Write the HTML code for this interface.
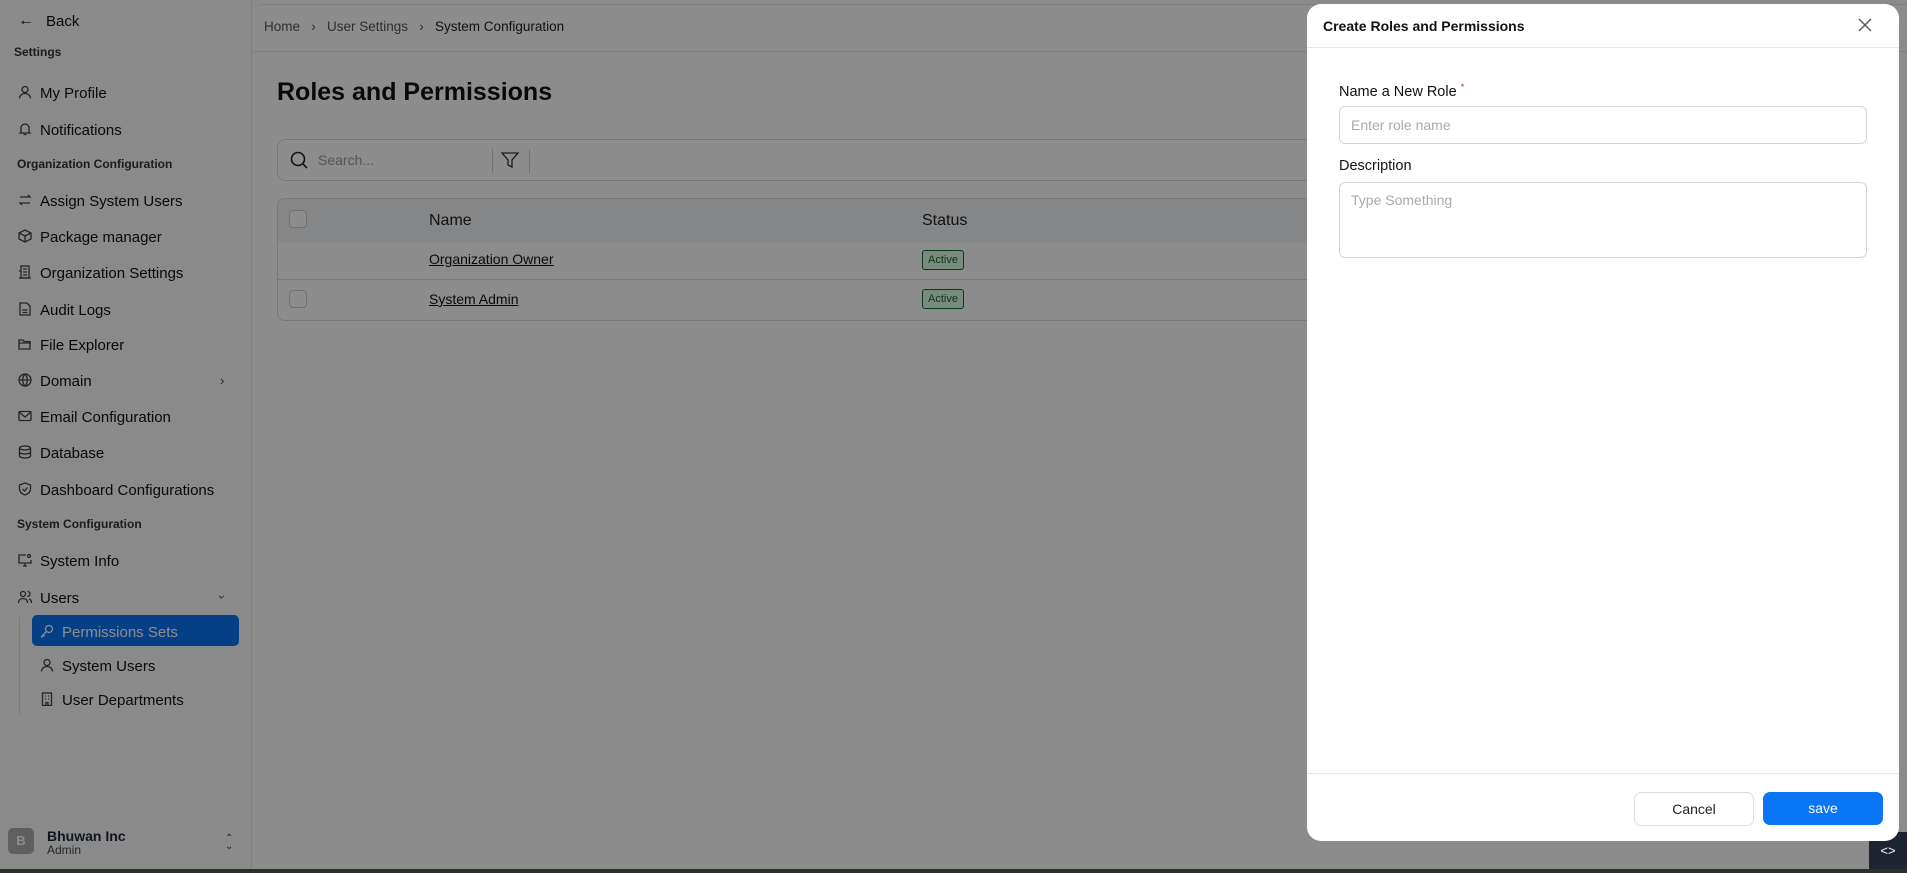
<!DOCTYPE html>
<html><head><meta charset="utf-8"><style>
*{box-sizing:border-box;margin:0;padding:0}
body{width:1907px;height:873px;overflow:hidden;font-family:"Liberation Sans",sans-serif;background:#fafbfc;position:relative;color:#111}
.sb{position:absolute;left:0;top:0;width:252px;height:869px;background:#fbfcfe;border-right:1px solid #e5e7eb}
.it{position:absolute;left:18px;font-size:15px;color:#111;display:flex;align-items:center;gap:8px;margin-top:3px}
.it svg{width:14px;height:14px;stroke:#444;fill:none;stroke-width:1.3;margin-top:-3px}
.sec{position:absolute;left:17px;font-size:12px;font-weight:bold;color:#333}
.main{position:absolute;left:252px;top:4px;width:1655px;height:865px;background:#fff;border-top-left-radius:12px;border-top:1px solid #e5e7eb}
.bc{position:absolute;left:12px;top:14px;font-size:13.5px;color:#555}
.bc b{font-weight:normal;color:#222}
.ov{position:absolute;left:0;top:0;width:1907px;height:873px;background:rgba(0,0,0,0.45)}
.modal{position:absolute;left:1307px;top:4px;width:592px;height:837px;background:#fff;border-radius:14px}
.inp{position:absolute;left:32px;width:528px;border:1px solid #d4d4d8;border-radius:6px;font-size:14px;color:#aaa;padding-left:11px}
</style></head><body>
<div class="sb">
 <div class="it" style="top:9px"><span style="font-size:16px">←</span><span style="margin-left:4px">Back</span></div>
 <div class="sec" style="top:45px;left:14px">Settings</div>
 <div class="it" style="top:82px"><svg viewBox="0 0 14 14"><circle cx="7" cy="4.5" r="3"/><path d="M1.5 13.5c0-3 2.5-5 5.5-5s5.5 2 5.5 5"/></svg>My Profile</div>
 <div class="it" style="top:119px"><svg viewBox="0 0 14 14"><path d="M3 10V6a4 4 0 018 0v4l1 1H2zM5.5 12.5h3"/></svg>Notifications</div>
 <div class="sec" style="top:157px">Organization Configuration</div>
 <div class="it" style="top:190px"><svg viewBox="0 0 14 14"><path d="M2 4h10l-2-2M12 10H2l2 2"/></svg>Assign System Users</div>
 <div class="it" style="top:226px"><svg viewBox="0 0 14 14"><path d="M7 1l6 3v6l-6 3-6-3V4zM1 4l6 3 6-3M7 7v6"/></svg>Package manager</div>
 <div class="it" style="top:262px"><svg viewBox="0 0 14 14"><rect x="3" y="1" width="8" height="12"/><path d="M1 6h2M1 13h12M5 4h4M5 7h4M5 10h4"/></svg>Organization Settings</div>
 <div class="it" style="top:299px"><svg viewBox="0 0 14 14"><path d="M2 1h7l3 3v9H2zM4.5 8h5M4.5 10.5h5"/></svg>Audit Logs</div>
 <div class="it" style="top:334px"><svg viewBox="0 0 14 14"><path d="M1 3h4l1 1.5h6V12H1zM1 6h12"/></svg>File Explorer</div>
 <div class="it" style="top:370px"><svg viewBox="0 0 14 14"><circle cx="7" cy="7" r="6"/><path d="M1 7h12M7 1c-3 3-3 9 0 12M7 1c3 3 3 9 0 12"/></svg>Domain</div>
 <div style="position:absolute;left:220px;top:373px;font-size:13px;color:#444">›</div>
 <div class="it" style="top:406px"><svg viewBox="0 0 14 14"><rect x="1" y="2.5" width="12" height="9" rx="1"/><path d="M1 3l6 5 6-5"/></svg>Email Configuration</div>
 <div class="it" style="top:442px"><svg viewBox="0 0 14 14"><ellipse cx="7" cy="3" rx="5.5" ry="2"/><path d="M1.5 3v8c0 1.1 2.5 2 5.5 2s5.5-.9 5.5-2V3M1.5 7c0 1.1 2.5 2 5.5 2s5.5-.9 5.5-2"/></svg>Database</div>
 <div class="it" style="top:479px"><svg viewBox="0 0 14 14"><path d="M7 1l5.5 2v4c0 3-2.5 5-5.5 6-3-1-5.5-3-5.5-6V3zM4.5 7l2 2 3-3.5"/></svg>Dashboard Configurations</div>
 <div class="sec" style="top:517px">System Configuration</div>
 <div class="it" style="top:550px"><svg viewBox="0 0 14 14"><path d="M8 2H1v8h12V7M5 13h4M7 10v3"/><circle cx="11" cy="3" r="1.5"/></svg>System Info</div>
 <div class="it" style="top:587px"><svg viewBox="0 0 14 14"><circle cx="5" cy="4" r="2.5"/><path d="M0.5 13c0-3 2-4.5 4.5-4.5s4.5 1.5 4.5 4.5M9.5 1.5a2.5 2.5 0 010 5M11 9c1.5.5 2.5 2 2.5 4"/></svg>Users</div>
 <div style="position:absolute;left:220px;top:590px;font-size:12px;color:#444;transform:rotate(90deg)">›</div>
 <div style="position:absolute;left:19px;top:617px;width:1px;height:97px;background:#ddd"></div>
 <div style="position:absolute;left:32px;top:615px;width:207px;height:31px;background:#0a75f5;border-radius:5px"></div>
 <div class="it" style="top:621px;left:40px;color:#fff"><svg viewBox="0 0 14 14" style="stroke:#fff"><circle cx="9" cy="5" r="3.5"/><path d="M6.5 7.5L1.5 12.5l1 1M3 11l1.5 1.5"/></svg>Permissions Sets</div>
 <div class="it" style="top:655px;left:40px"><svg viewBox="0 0 14 14"><circle cx="7" cy="4.5" r="3"/><path d="M1.5 13.5c0-3 2.5-5 5.5-5s5.5 2 5.5 5"/></svg>System Users</div>
 <div class="it" style="top:689px;left:40px"><svg viewBox="0 0 14 14"><rect x="2.5" y="1" width="9" height="12.5"/><path d="M5 4h1M8 4h1M5 7h1M8 7h1M6 13.5v-3h2v3"/></svg>User Departments</div>
 <div style="position:absolute;left:8px;top:828px;width:26px;height:26px;background:#aeaeae;border-radius:5px;color:#fff;font-weight:bold;font-size:13px;text-align:center;line-height:26px">B</div>
 <div style="position:absolute;left:47px;top:828px;font-size:14px;font-weight:bold;color:#1f2937">Bhuwan Inc</div>
 <div style="position:absolute;left:47px;top:843px;font-size:12px;color:#444">Admin</div>
 <div style="position:absolute;left:225px;top:835px;font-size:10px;color:#444;line-height:8px">⌃<br>⌄</div>
</div>
<div class="main">
 <div class="bc">Home &nbsp;&nbsp;›&nbsp;&nbsp; User Settings &nbsp;&nbsp;›&nbsp;&nbsp; <b>System Configuration</b></div>
 <div style="position:absolute;left:0;top:46px;width:100%;height:1px;background:#e5e7eb"></div>
 <div style="position:absolute;left:25px;top:73px;font-size:25px;font-weight:bold;color:#111">Roles and Permissions</div>
 <div style="position:absolute;left:25px;top:134px;width:1200px;height:42px;border:1px solid #d9d9d9;border-radius:8px">
  <svg style="position:absolute;left:12px;top:11px" width="18" height="18" viewBox="0 0 18 18" fill="none" stroke="#222" stroke-width="1.6"><circle cx="8" cy="8" r="6.5"/><path d="M13 13l4 4"/></svg>
  <span style="position:absolute;left:40px;top:12px;font-size:14px;color:#999">Search...</span>
  <div style="position:absolute;left:214px;top:9px;width:1px;height:24px;background:#ccc"></div>
  <svg style="position:absolute;left:223px;top:11px" width="18" height="18" viewBox="0 0 18 18" fill="none" stroke="#333" stroke-width="1.3"><path d="M1 2h16l-6 7v7l-4-2V9z"/></svg>
  <div style="position:absolute;left:251px;top:9px;width:1px;height:24px;background:#ccc"></div>
 </div>
 <div style="position:absolute;left:25px;top:193px;width:1200px;height:123px;border:1px solid #d9d9d9;border-radius:8px;overflow:hidden">
  <div style="height:43px;background:#f3f4f6;position:relative">
   <div style="position:absolute;left:11px;top:11px;width:18px;height:18px;border:1px solid #ccc;border-radius:4px;background:#fff"></div>
   <span style="position:absolute;left:151px;top:13px;font-size:16px;color:#222">Name</span>
   <span style="position:absolute;left:644px;top:13px;font-size:16px;color:#222">Status</span>
  </div>
  <div style="height:38px;border-bottom:1px solid #ddd;position:relative">
   <span style="position:absolute;left:151px;top:9px;font-size:14px;text-decoration:underline;color:#111">Organization Owner</span>
   <span style="position:absolute;left:644px;top:8px;font-size:11px;color:#166534;background:#dcfce7;border:1px solid #166534;border-radius:3px;padding:3px 5px">Active</span>
  </div>
  <div style="height:42px;position:relative">
   <div style="position:absolute;left:11px;top:10px;width:18px;height:18px;border:1px solid #ccc;border-radius:4px;background:#fff"></div>
   <span style="position:absolute;left:151px;top:11px;font-size:14px;text-decoration:underline;color:#111">System Admin</span>
   <span style="position:absolute;left:644px;top:9px;font-size:11px;color:#166534;background:#dcfce7;border:1px solid #166534;border-radius:3px;padding:3px 5px">Active</span>
  </div>
 </div>
</div>
<div class="ov"></div>
<div style="position:absolute;left:0;top:869px;width:1907px;height:4px;background:#2b302a"></div>
<div style="position:absolute;left:1869px;top:832px;width:38px;height:37px;background:#1e2530;color:#fff;font-size:13px;text-align:center;line-height:37px">&lt;&gt;</div>
<div class="modal">
 <div style="position:absolute;left:16px;top:14px;font-size:14px;font-weight:bold;color:#111">Create Roles and Permissions</div>
 <svg style="position:absolute;left:551px;top:14px" width="14" height="14" viewBox="0 0 14 14" stroke="#555" stroke-width="1.4"><path d="M1 1l12 12M13 1L1 13"/></svg>
 <div style="position:absolute;left:0;top:43px;width:100%;height:1px;background:#e5e7eb"></div>
 <div style="position:absolute;left:32px;top:78px;font-size:14.5px;color:#111">Name a New Role <sup style="color:#e11;font-size:9px">*</sup></div>
 <div class="inp" style="top:102px;height:38px;line-height:36px">Enter role name</div>
 <div style="position:absolute;left:32px;top:154px;font-size:14.5px;color:#111">Description</div>
 <div class="inp" style="top:178px;height:76px;padding-top:9px">Type Something</div>
 <div style="position:absolute;left:0;top:769px;width:100%;height:1px;background:#e2e8f0"></div>
 <div style="position:absolute;left:327px;top:788px;width:120px;height:34px;border:1px solid #ddd;border-radius:7px;text-align:center;line-height:32px;font-size:14px;color:#222">Cancel</div>
 <div style="position:absolute;left:456px;top:788px;width:120px;height:33px;background:#0a75f5;border-radius:7px;text-align:center;line-height:33px;font-size:14px;color:#fff">save</div>
</div>
</body></html>
